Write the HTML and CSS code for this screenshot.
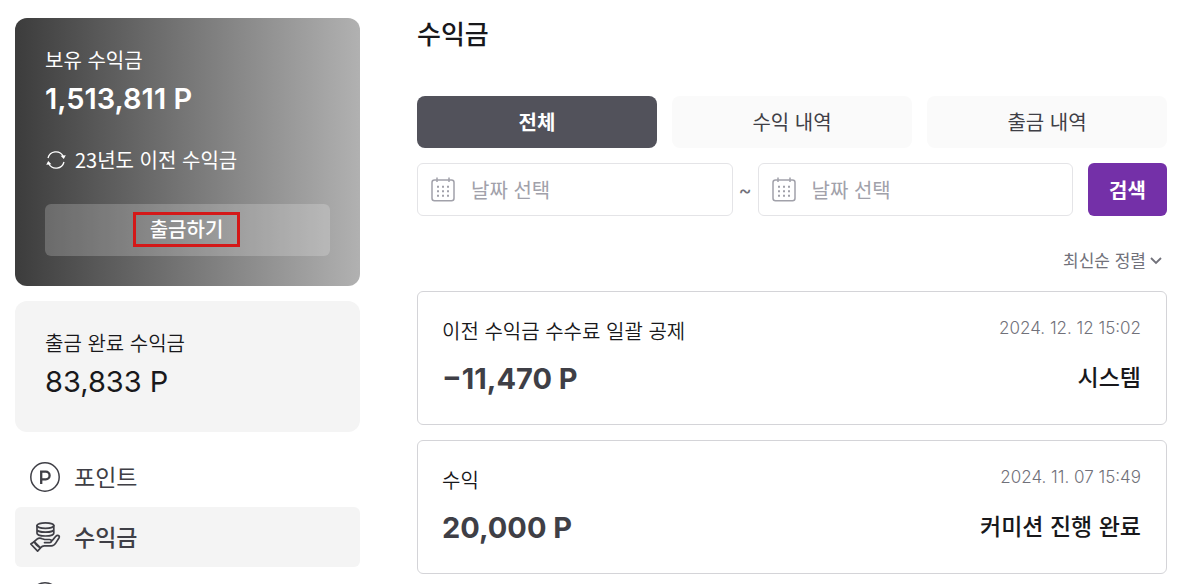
FILE: index.html
```html
<!DOCTYPE html>
<html lang="ko">
<head>
<meta charset="utf-8">
<meta name="viewport" content="width=device-width, initial-scale=1">
<title>수익금</title>
<link rel="stylesheet" href="styles.css">
</head>
<body>
<div class="page">
  <aside class="sidebar">
    <section class="balance">
      <p class="label label-strong">보유 수익금</p>
      <p class="amount amount-bold">1,513,811 P</p>
      <a class="previous" href="#">
        <svg width="20" height="20" viewBox="0 0 20 20" fill="none" stroke="currentColor" stroke-width="1.3" aria-hidden="true">
          <path d="M2 8A8.2 8.2 0 0 1 17.2 6.2M18 12A8.2 8.2 0 0 1 2.8 13.8"/>
          <path d="M14.6 5.8l5.2-.6-2 3.8zM5.4 14.2l-5.2.6 2-3.8z" fill="currentColor" stroke="none"/>
        </svg>
        <span class="label-strong">23년도 이전 수익금</span>
      </a>
      <button class="withdraw" type="button"><span class="withdraw-text">출금하기</span></button>
    </section>
    <section class="completed">
      <p class="label">출금 완료 수익금</p>
      <p class="amount">83,833 P</p>
    </section>
    <nav class="menu">
      <a class="menu-item" href="#">
        <svg width="30" height="30" viewBox="0 0 30 30" fill="none" stroke="currentColor" stroke-width="1.5" aria-hidden="true">
          <circle cx="15" cy="15" r="14.2"/>
          <path d="M11.2 22V9.7h4.6a3.8 3.8 0 0 1 0 7.6h-4.6" stroke-width="2.3"/>
        </svg>
        <span class="menu-text">포인트</span>
      </a>
      <a class="menu-item menu-current" href="#" aria-current="page">
        <svg width="30" height="30" viewBox="0 0 30 30" fill="none" stroke="currentColor" stroke-width="1.7" stroke-linejoin="round" stroke-linecap="round" aria-hidden="true">
          <ellipse cx="15.4" cy="3.6" rx="8.4" ry="2.8"/>
          <path d="M7 3.6v7.6c0 1.6 3.8 2.8 8.4 2.8s8.4-1.2 8.4-2.8V3.6M7 7.4c0 1.6 3.8 2.8 8.4 2.8s8.4-1.2 8.4-2.8"/>
          <path d="M4.2 19.7l2.8-2.5c1.3-1 3.2-1.3 5.2-.5l2.4.8h4.8c2.7 0 2.7 3.1 0 3.1h-4.9M21 19.8l2.2-2.4 2.6-3.1c1.7-1.7 4.3-.6 3.3 1.4l-3.4 5.4c-1.2 2-2.2 2.7-4.4 2.7h-7.1c-1.6 0-2.4.5-3.9 2"/>
          <path d="M.8 22l3.4-2.3 6.3 6.2-2.9 3.3zM4.2 19.7c1.3 2.9 3 4.5 6.3 6.2"/>
        </svg>
        <span class="menu-text">수익금</span>
      </a>
      <a class="menu-item" href="#" aria-label="메뉴">
        <svg width="30" height="30" viewBox="0 0 30 30" fill="none" stroke="currentColor" stroke-width="1.5" aria-hidden="true">
          <circle cx="15" cy="15" r="14.2"/>
        </svg>
      </a>
    </nav>
  </aside>

  <main class="content">
    <h1 class="title">수익금</h1>
    <div class="tabs">
      <button class="tab tab-current" type="button">전체</button>
      <button class="tab" type="button">수익 내역</button>
      <button class="tab" type="button">출금 내역</button>
    </div>
    <form class="search">
      <label class="date">
        <svg width="24" height="24" viewBox="0 0 24 24" fill="none" stroke="currentColor" stroke-width="1.5" aria-hidden="true">
          <rect x="1" y="2" width="22" height="20.7" rx="2.5"/>
          <path d="M6 -.5v4.5M18 -.5v4.5"/>
          <path d="M6 8.7h2m3 0h2m3 0h2M6 13.2h2m3 0h2m3 0h2M6 17.7h2m3 0h2m3 0h2" stroke-width="2"/>
        </svg>
        <input class="date-input" type="text" placeholder="날짜 선택" aria-label="시작 날짜">
      </label>
      <span class="tilde">~</span>
      <label class="date">
        <svg width="24" height="24" viewBox="0 0 24 24" fill="none" stroke="currentColor" stroke-width="1.5" aria-hidden="true">
          <rect x="1" y="2" width="22" height="20.7" rx="2.5"/>
          <path d="M6 -.5v4.5M18 -.5v4.5"/>
          <path d="M6 8.7h2m3 0h2m3 0h2M6 13.2h2m3 0h2m3 0h2M6 17.7h2m3 0h2m3 0h2" stroke-width="2"/>
        </svg>
        <input class="date-input" type="text" placeholder="날짜 선택" aria-label="종료 날짜">
      </label>
      <button class="submit" type="button">검색</button>
    </form>
    <div class="sort">
      <select class="sort-select" aria-label="정렬">
        <option>최신순 정렬</option>
      </select>
      <svg class="sort-arrow" width="12" height="8" viewBox="0 0 12 8" fill="none" stroke="currentColor" stroke-width="1.8" aria-hidden="true"><path d="M1 1l5 5 5-5"/></svg>
    </div>
    <ul class="entries">
      <li class="entry">
        <div class="entry-side">
          <span class="entry-title">이전 수익금 수수료 일괄 공제</span>
          <strong class="entry-amount">−11,470 P</strong>
        </div>
        <div class="entry-side entry-right">
          <time class="entry-date" datetime="2024-12-12T15:02">2024. 12. 12 15:02</time>
          <span class="entry-kind">시스템</span>
        </div>
      </li>
      <li class="entry">
        <div class="entry-side">
          <span class="entry-title">수익</span>
          <strong class="entry-amount">20,000 P</strong>
        </div>
        <div class="entry-side entry-right">
          <time class="entry-date" datetime="2024-11-07T15:49">2024. 11. 07 15:49</time>
          <span class="entry-kind">커미션 진행 완료</span>
        </div>
      </li>
    </ul>
  </main>
</div>
</body>
</html>
```
FILE: styles.css
```css
* {
  box-sizing: border-box;
}

body {
  margin: 0;
  height: 100vh;
  overflow: hidden;
  background: #fff;
  color: #18181b;
  font-family: "Noto Sans CJK KR", sans-serif;
  font-size: 20px;
  line-height: 28px;
}

p, h1, ul {
  margin: 0;
  padding: 0;
}

a {
  color: inherit;
  text-decoration: none;
}

button, input, select {
  font: inherit;
  border: 0;
  padding: 0;
}

svg {
  flex: none;
  overflow: visible;
}

.page {
  display: grid;
  grid-template-columns: 345px 1fr;
  gap: 57px;
  padding: 18px 10px 10px 15px;
}

.balance {
  padding: 28px 30px 30px;
  border-radius: 12px;
  background: linear-gradient(90deg, #3c3c3c, #b1b1b1);
  color: #fff;
}

.label {
  font-weight: 350;
}

.label-strong {
  font-weight: 400;
}

.amount {
  margin-top: 5px;
  font-family: Inter, sans-serif;
  font-size: 29px;
  line-height: 40px;
}

.amount-bold {
  font-weight: 600;
}

.previous {
  display: flex;
  align-items: center;
  gap: 9px;
  margin-top: 26px;
  padding-left: 1px;
  line-height: 30px;
}

.withdraw {
  display: grid;
  place-items: center;
  width: 100%;
  height: 52px;
  margin-top: 29px;
  padding: 0 2px 2px 0;
  border-radius: 6px;
  background: rgba(255, 255, 255, 0.2);
  color: #fff;
  font-weight: 500;
}

.withdraw-text {
  padding: 0 14px 1px;
  border: 3px solid #d41818;
  line-height: 28px;
}

.completed {
  margin-top: 15px;
  padding: 28px 30px 30px;
  border-radius: 12px;
  background: #f4f4f4;
}

.menu {
  margin-top: 15px;
}

.menu-item {
  display: flex;
  align-items: center;
  gap: 14px;
  height: 60px;
  padding-left: 15px;
  border-radius: 6px;
  color: #3f3f46;
  font-size: 23px;
}

.menu-text {
  padding-bottom: 2px;
}

.menu-current {
  background: #f4f4f4;
  font-weight: 500;
}

.title {
  font-size: 26px;
  font-weight: 500;
  line-height: 30px;
}

.tabs {
  display: grid;
  grid-template-columns: repeat(3, 1fr);
  gap: 15px;
  margin-top: 48px;
}

.tab {
  height: 52px;
  border-radius: 8px;
  background: #fafafa;
  color: #3f3f46;
}

.tab-current {
  background: #52525b;
  color: #fff;
  font-weight: 700;
}

.search {
  display: flex;
  align-items: center;
  margin-top: 15px;
}

.date {
  display: flex;
  flex: 1;
  align-items: center;
  gap: 16px;
  min-width: 0;
  height: 53px;
  padding: 0 13px;
  border: 1px solid #e4e4e7;
  border-radius: 6px;
  color: #a1a1aa;
}

.date-input {
  flex: 1;
  min-width: 0;
  background: none;
  outline: 0;
}

.date-input::placeholder {
  color: #a1a1aa;
}

.tilde {
  width: 25px;
  color: #71717a;
  font-family: Inter, sans-serif;
  text-align: center;
}

.submit {
  width: 79px;
  height: 53px;
  margin-left: 15px;
  border-radius: 6px;
  background: #7430a8;
  color: #fff;
  font-weight: 700;
}

.sort {
  position: relative;
  display: flex;
  justify-content: flex-end;
  margin-top: 30px;
  padding-right: 4px;
  color: #71717a;
}

.sort-select {
  appearance: none;
  height: 28px;
  padding-right: 17px;
  background: none;
  color: inherit;
  font-size: 17px;
}

.sort-arrow {
  position: absolute;
  top: 11px;
  right: 5px;
  pointer-events: none;
}

.entries {
  display: grid;
  gap: 15px;
  margin-top: 17px;
  list-style: none;
}

.entry {
  display: flex;
  justify-content: space-between;
  min-height: 134px;
  padding: 25px 25px 24px 24px;
  border: 1px solid #d4d4d8;
  border-radius: 6px;
}

.entry-side {
  display: flex;
  flex-direction: column;
  gap: 14px;
}

.entry-right {
  align-items: flex-end;
}

.entry-title {
  font-weight: 350;
  line-height: 28px;
}

.entry-amount {
  color: #3f3f46;
  font-family: Inter, sans-serif;
  font-size: 29px;
  font-weight: 700;
  line-height: 40px;
}

.entry-date {
  color: #71717a;
  font-family: Inter, sans-serif;
  font-size: 17px;
  font-weight: 300;
  line-height: 22px;
}

.entry-kind {
  font-size: 23px;
  font-weight: 500;
  line-height: 46px;
}
```
